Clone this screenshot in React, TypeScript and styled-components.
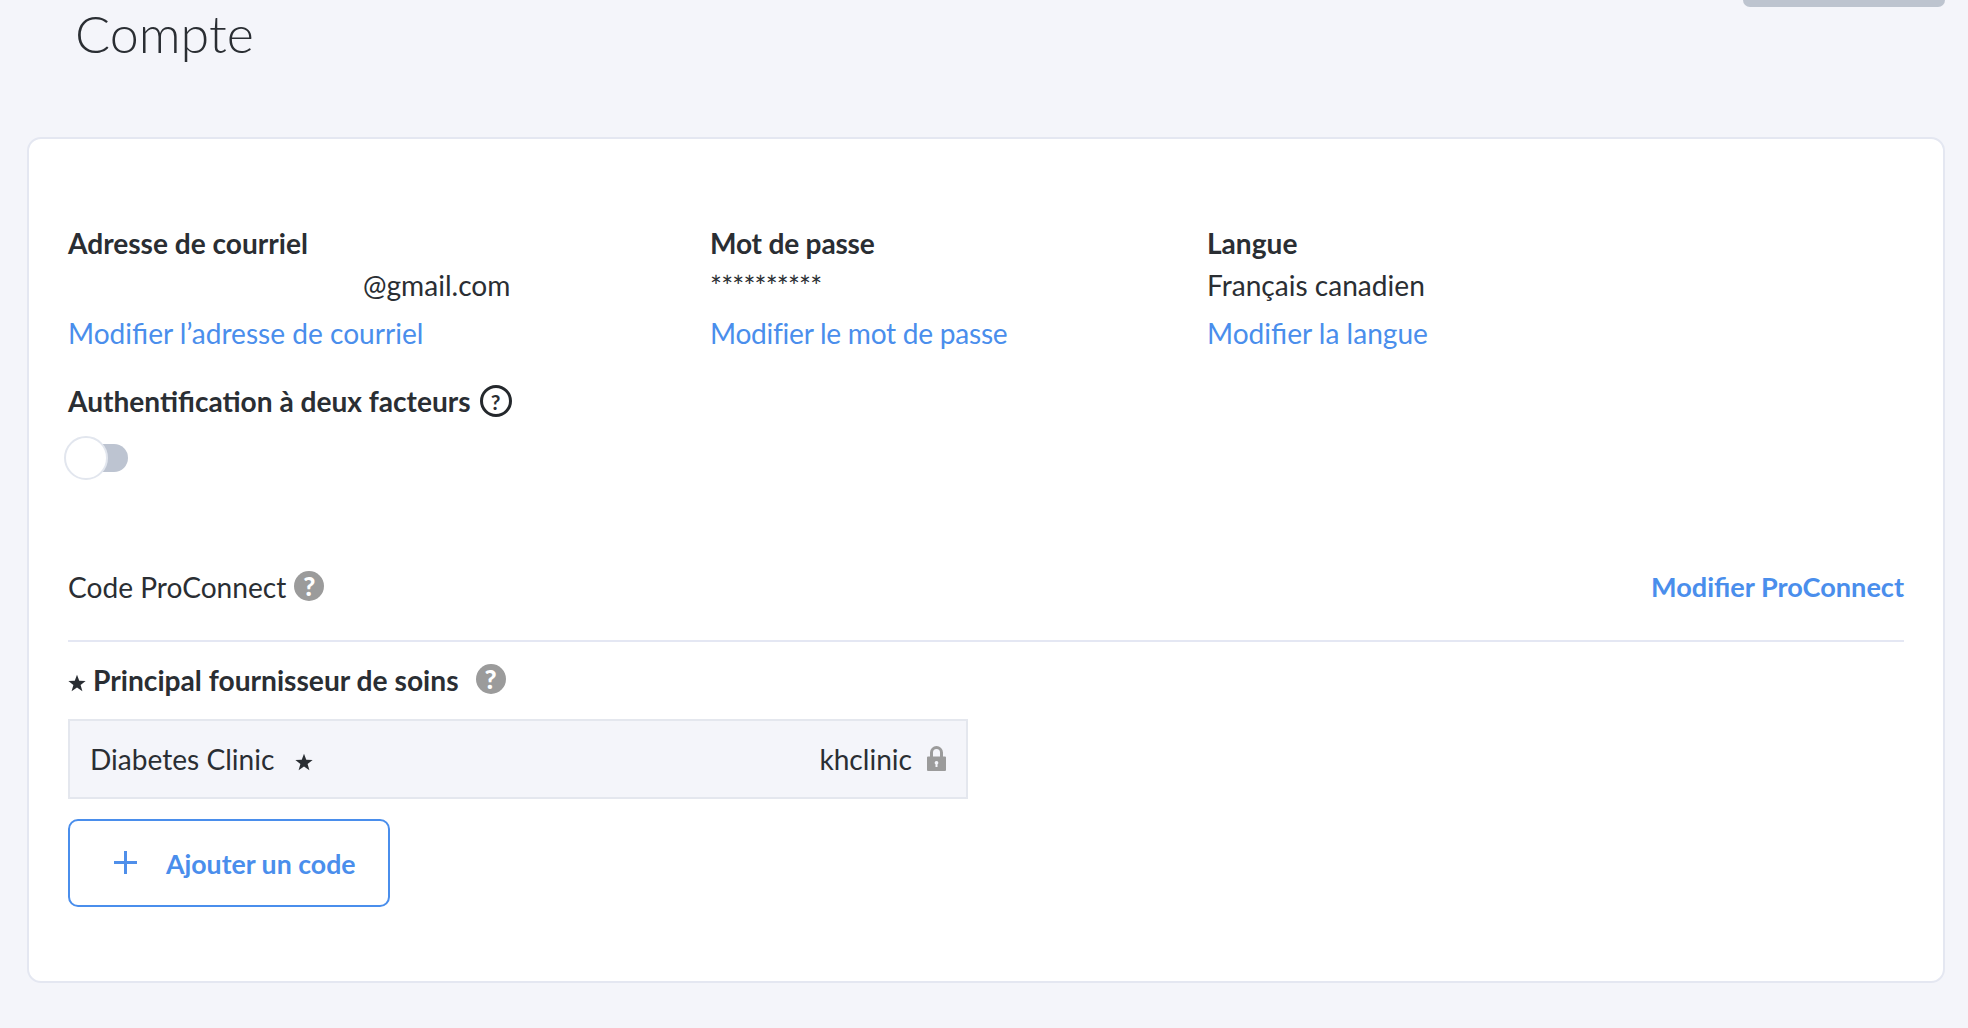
import styled, { createGlobalStyle } from 'styled-components';

const GlobalStyle = createGlobalStyle`
  html, body {
    margin: 0;
    background: #f4f5fa;
    font-family: Lato, "Open Sans", sans-serif;
    color: #2a2e33;
  }
`;

const Page = styled.div`
  height: 1028px;
  overflow: hidden;
  padding: 0 23px 0 27px;
`;

const Header = styled.header`
  display: flex;
  justify-content: space-between;
  align-items: flex-start;
  height: 137px;
`;

const Title = styled.h1`
  margin: 0;
  padding: 3px 0 0 48px;
  font-size: 52px;
  line-height: 60px;
  font-weight: 300;
`;

const CroppedButton = styled.div`
  width: 202px;
  height: 7px;
  background: #bdc4cf;
  border-radius: 0 0 10px 10px;
`;

const Card = styled.section`
  height: 846px;
  box-sizing: border-box;
  background: #fff;
  border: 2px solid #e4e7f1;
  border-radius: 14px;
  padding: 85px 39px 0;
`;

const Columns = styled.div`
  display: grid;
  grid-template-columns: 642px 497px 1fr;
`;

const Field = styled.div`
  display: flex;
  flex-direction: column;
`;

const Label = styled.div<{ $tight?: boolean }>`
  font-size: 28.1px;
  line-height: 38px;
  font-weight: 700;
  letter-spacing: ${({ $tight }) => ($tight ? '-0.2px' : 'normal')};
`;

const Value = styled.div<{ $indent?: number }>`
  font-size: 28.1px;
  line-height: 40px;
  height: 40px;
  margin: 3px 0 10px;
  padding-left: ${({ $indent }) => $indent ?? 0}px;
`;

const PasswordMask = styled(Value)`
  letter-spacing: -0.8px;
  padding-top: 1px;
  height: 39px;
`;

const Link = styled.a<{ $bold?: boolean; $tight?: boolean }>`
  font-size: ${({ $bold }) => ($bold ? 27.1 : 28.1)}px;
  line-height: 36px;
  font-weight: ${({ $bold }) => ($bold ? 700 : 400)};
  letter-spacing: ${({ $tight }) => ($tight ? '-0.26px' : 'normal')};
  color: #4a8eec;
  text-decoration: none;
`;

const LabelRow = styled.div`
  display: flex;
  align-items: center;
  gap: 9px;
  margin-top: 31px;
  height: 38px;
`;

const OutlineHelp = styled.span`
  width: 26px;
  height: 26px;
  border: 3px solid #24282c;
  border-radius: 50%;
  display: flex;
  align-items: center;
  justify-content: center;
  font-size: 21px;
  font-weight: 700;
`;

const Toggle = styled.div`
  display: flex;
  align-items: center;
  margin: 16px 0 0 -4px;
  width: 64px;
`;

const ToggleKnob = styled.span`
  width: 40px;
  height: 40px;
  border: 2px solid #e2e6ee;
  border-radius: 50%;
  background: #fff;
  position: relative;
  z-index: 1;
  flex: none;
`;

const ToggleTrack = styled.span`
  width: 40px;
  height: 28px;
  margin-left: -20px;
  border-radius: 0 14px 14px 0;
  background: #bdc4d1;
  flex: none;
`;

const ProConnectRow = styled.div`
  display: flex;
  justify-content: space-between;
  align-items: center;
  margin-top: 88px;
  height: 38px;
  padding-bottom: 34px;
  border-bottom: 2px solid #e4e7f3;
`;

const RowStart = styled.div<{ $gap: number }>`
  display: flex;
  align-items: center;
  gap: ${({ $gap }) => $gap}px;
`;

const Text = styled.span`
  font-size: 28.1px;
  line-height: 38px;
`;

const FilledHelp = styled.span`
  width: 30px;
  height: 30px;
  margin-top: -3px;
  border-radius: 50%;
  background: #9b9b9b;
  color: #fff;
  display: flex;
  align-items: center;
  justify-content: center;
  font-size: 26px;
  font-weight: 900;
`;

const ProviderHeading = styled.div`
  display: flex;
  align-items: center;
  margin-top: 19px;
  height: 38px;
`;

const ProviderTitle = styled.span`
  font-size: 28.2px;
  line-height: 38px;
  font-weight: 700;
  margin: 0 17px 0 7px;
`;

const ProviderRow = styled.div`
  display: flex;
  justify-content: space-between;
  align-items: center;
  box-sizing: border-box;
  width: 900px;
  height: 80px;
  margin-top: 20px;
  padding: 0 20px;
  background: #f4f5fa;
  border: 2px solid #e4e7ee;
`;

const StarIcon = styled.svg`
  width: 18px;
  height: 18px;
  fill: #2a2e33;
  margin-top: 5px;
  flex: none;
`;

const LockIcon = styled.svg`
  width: 19px;
  height: 25px;
  flex: none;
  margin-top: -2px;
`;

const AddButton = styled.button`
  display: flex;
  align-items: center;
  gap: 29px;
  box-sizing: border-box;
  width: 322px;
  height: 88px;
  margin-top: 20px;
  padding: 2px 0 0 44px;
  background: #fff;
  border: 2px solid #4a8eec;
  border-radius: 10px;
  color: #4a8eec;
  font-family: inherit;
  font-size: 26.7px;
  font-weight: 700;
`;

const PlusIcon = styled.svg`
  width: 23px;
  height: 23px;
  flex: none;
  margin-top: -3px;
  stroke: #4f8fea;
  stroke-width: 3;
`;

const Star = () => (
  <StarIcon viewBox="0 0 24 24">
    <polygon points="12,1 15,9 23.5,9.3 16.8,14.6 19.2,23 12,18.1 4.8,23 7.2,14.6 0.5,9.3 9,9" />
  </StarIcon>
);

export default function App() {
  return (
    <Page>
      <GlobalStyle />
      <Header>
        <Title>Compte</Title>
        <CroppedButton />
      </Header>
      <Card>
        <Columns>
          <Field>
            <Label>Adresse de courriel</Label>
            <Value $indent={295}>@gmail.com</Value>
            <Link href="#">Modifier l’adresse de courriel</Link>
          </Field>
          <Field>
            <Label $tight>Mot de passe</Label>
            <PasswordMask>**********</PasswordMask>
            <Link href="#" $tight>Modifier le mot de passe</Link>
          </Field>
          <Field>
            <Label>Langue</Label>
            <Value>Français canadien</Value>
            <Link href="#">Modifier la langue</Link>
          </Field>
        </Columns>
        <LabelRow>
          <Label>Authentification à deux facteurs</Label>
          <OutlineHelp>?</OutlineHelp>
        </LabelRow>
        <Toggle>
          <ToggleKnob />
          <ToggleTrack />
        </Toggle>
        <ProConnectRow>
          <RowStart $gap={8}>
            <Text>Code ProConnect</Text>
            <FilledHelp>?</FilledHelp>
          </RowStart>
          <Link href="#" $bold>Modifier ProConnect</Link>
        </ProConnectRow>
        <ProviderHeading>
          <Star />
          <ProviderTitle>Principal fournisseur de soins</ProviderTitle>
          <FilledHelp>?</FilledHelp>
        </ProviderHeading>
        <ProviderRow>
          <RowStart $gap={21}>
            <Text>Diabetes Clinic</Text>
            <Star />
          </RowStart>
          <RowStart $gap={15}>
            <Text>khclinic</Text>
            <LockIcon viewBox="0 0 19 25">
              <path
                d="M4.5 11V6.5a5 5 0 0 1 10 0V11"
                fill="none"
                stroke="#9b9b9b"
                strokeWidth="3"
              />
              <path
                fillRule="evenodd"
                fill="#9b9b9b"
                d="M1 10.5h17a1 1 0 0 1 1 1V24a1 1 0 0 1-1 1H1a1 1 0 0 1-1-1V11.500a1 1 0 0 1 1-1zM9.500 15a1.800 1.800 0 0 0-1 3.300V21h2v-2.700a1.800 1.800 0 0 0-1-3.300z"
              />
            </LockIcon>
          </RowStart>
        </ProviderRow>
        <AddButton>
          <PlusIcon viewBox="0 0 23 23">
            <path d="M11.5 0v23M0 11.500h23" />
          </PlusIcon>
          Ajouter un code
        </AddButton>
      </Card>
    </Page>
  );
}
